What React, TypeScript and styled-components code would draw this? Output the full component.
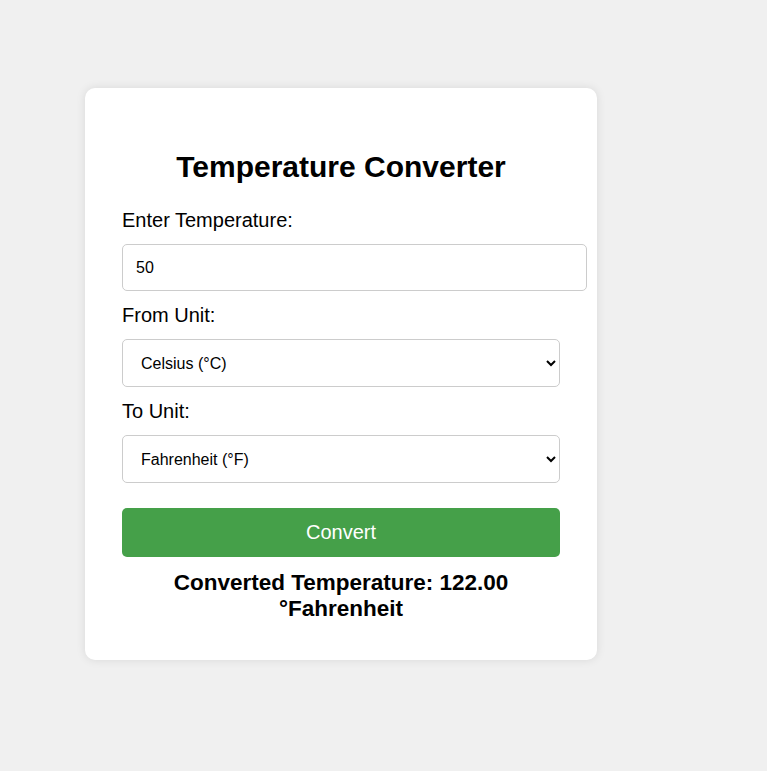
import React, { useState } from "react";
import styled, { createGlobalStyle } from "styled-components";

const GlobalStyle = createGlobalStyle`
  html, body {
    margin: 0;
    padding: 0;
    background: #f0f0f0;
    font-family: "Liberation Sans", Arial, sans-serif;
  }
`;

const Page = styled.div`
  min-height: 771px;
  padding: 88px 0 0 85px;
  box-sizing: border-box;
`;

const Card = styled.div`
  width: 512px;
  box-sizing: border-box;
  padding: 37px 37px 38px 37px;
  background: #fff;
  border-radius: 10px;
  box-shadow: 0 0 10px rgba(0, 0, 0, 0.1);
  display: flex;
  flex-direction: column;
`;

const Title = styled.h2`
  margin: 25px 0 25px 0;
  font-size: 30px;
  line-height: 34px;
  font-weight: bold;
  text-align: center;
  color: #000;
`;

const Label = styled.label`
  display: block;
  font-size: 20px;
  line-height: 23px;
  color: #000;
  margin-bottom: 12px;
`;

const Field = styled.div`
  display: flex;
  flex-direction: column;
  align-items: flex-start;
  margin-bottom: ${(p: { $gap: number }) => p.$gap}px;
`;

const TextInput = styled.input`
  width: 465px;
  height: 47px;
  box-sizing: border-box;
  padding: 0 13px;
  border: 1px solid #ccc;
  border-radius: 5px;
  font-family: "Liberation Sans", Arial, sans-serif;
  font-size: 16px;
  color: #000;
  background: #fff;
  outline: none;
`;

const Select = styled.select`
  width: 438px;
  height: 48px;
  box-sizing: border-box;
  padding: 0 12px 0 14px;
  border: 1px solid #ccc;
  border-radius: 5px;
  font-family: "Liberation Sans", Arial, sans-serif;
  font-size: 16px;
  color: #000;
  background: #fff;
  outline: none;
`;

const Button = styled.button`
  width: 438px;
  height: 49px;
  border: none;
  border-radius: 5px;
  background: #45a049;
  color: #fff;
  font-family: "Liberation Sans", Arial, sans-serif;
  font-size: 20px;
  cursor: pointer;
  margin-bottom: 13px;
`;

const Result = styled.h3`
  margin: 0 auto;
  width: 370px;
  font-size: 22.5px;
  line-height: 26px;
  font-weight: bold;
  text-align: center;
  color: #000;
`;

export default function App() {
  const [temp, setTemp] = useState("50");
  const [from, setFrom] = useState("celsius");
  const [to, setTo] = useState("fahrenheit");

  return (
    <>
      <GlobalStyle />
      <Page>
        <Card>
          <Title>Temperature Converter</Title>
          <Field $gap={13}>
            <Label>Enter Temperature:</Label>
            <TextInput value={temp} onChange={(e) => setTemp(e.target.value)} />
          </Field>
          <Field $gap={13}>
            <Label>From Unit:</Label>
            <Select value={from} onChange={(e) => setFrom(e.target.value)}>
              <option value="celsius">Celsius (°C)</option>
              <option value="fahrenheit">Fahrenheit (°F)</option>
              <option value="kelvin">Kelvin (K)</option>
            </Select>
          </Field>
          <Field $gap={25}>
            <Label>To Unit:</Label>
            <Select value={to} onChange={(e) => setTo(e.target.value)}>
              <option value="celsius">Celsius (°C)</option>
              <option value="fahrenheit">Fahrenheit (°F)</option>
              <option value="kelvin">Kelvin (K)</option>
            </Select>
          </Field>
          <Button>Convert</Button>
          <Result>Converted Temperature: 122.00 °Fahrenheit</Result>
        </Card>
      </Page>
    </>
  );
}
